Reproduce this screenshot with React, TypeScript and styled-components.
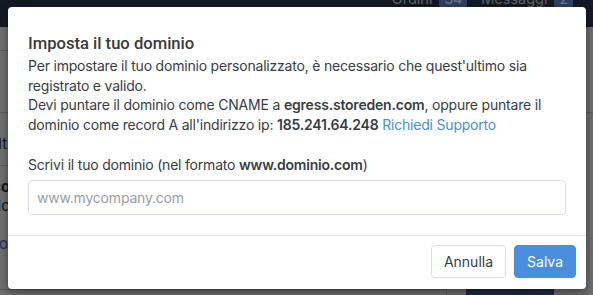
import React from "react";
import styled, { createGlobalStyle } from "styled-components";

const GlobalStyle = createGlobalStyle`
  html, body {
    margin: 0;
    padding: 0;
    overflow: hidden;
  }
  body {
    font-family: Inter, "Noto Sans", sans-serif;
  }
  * {
    box-sizing: border-box;
  }
`;

const Page = styled.div`
  position: relative;
  width: 593px;
  height: 295px;
  background-color: #f2f2f2;
  overflow: hidden;
`;

const TopBar = styled.div`
  height: 27px;
  background-color: #2d3a50;
  display: flex;
  justify-content: flex-end;
  align-items: flex-start;
  padding-right: 20px;
`;

const NavItem = styled.div`
  display: flex;
  align-items: center;
  gap: 7px;
  margin-top: -10px;
  margin-left: 14px;
  font-size: 14.5px;
  line-height: 18px;
  color: #d8d8d8;
`;

const Badge = styled.span`
  background-color: #5f93e0;
  color: #ffffff;
  border-radius: 3px;
  padding: 0 5px;
  font-size: 14px;
`;

const Body = styled.div`
  display: flex;
  height: calc(100% - 27px);
`;

const SidePanel = styled.div`
  width: 447px;
  background-color: #f5f5f5;
  border-right: 1px solid #cccccc;
`;

const PanelRow = styled.div<{ h: number; top: number }>`
  height: ${(p) => p.h}px;
  border-bottom: 1px solid #cccccc;
  padding-top: ${(p) => p.top}px;
  font-size: 15px;
  color: #333333;
`;

const PanelText = styled.div<{ link?: boolean; bold?: boolean }>`
  margin-left: -12px;
  line-height: 19px;
  color: ${(p) => (p.link ? "#3a7bd5" : "#333333")};
  font-weight: ${(p) => (p.bold ? 700 : 400)};
`;

const MainArea = styled.div`
  flex: 1;
  display: flex;
  flex-direction: column;
`;

const MainRow = styled.div<{ h: number }>`
  height: ${(p) => p.h}px;
  border-bottom: 1px solid #cccccc;
`;

const MainFooter = styled.div`
  flex: 1;
  display: flex;
  align-items: flex-end;
  padding-left: 19px;
`;

const NavyBlock = styled.div`
  width: 88px;
  height: 6px;
  background-color: #3c5e97;
`;

const Overlay = styled.div`
  position: absolute;
  inset: 0;
  background-color: rgba(0, 0, 0, 0.55);
  padding: 7px 0 0 8px;
`;

const Modal = styled.div`
  width: 578px;
  height: 282px;
  background-color: #ffffff;
  border-radius: 4px;
  box-shadow: 0 3px 9px rgba(0, 0, 0, 0.45);
  display: flex;
  flex-direction: column;
  color: #383d44;
`;

const ModalBody = styled.div`
  padding: 26px 20px 20px;
  border-bottom: 1px solid #e4e6ea;
`;

const Title = styled.h4`
  margin: 0 0 1px;
  font-family: Roboto, "Liberation Sans", sans-serif;
  font-size: 16.6px;
  line-height: 22px;
  font-weight: 500;
  color: #3a3a3a;
`;

const Paragraph = styled.p`
  margin: 0;
  font-size: 14px;
  line-height: 19.5px;
  letter-spacing: -0.2px;
`;

const Strong = styled.b`
  font-weight: 600;
`;

const Link = styled.a`
  color: #4a8fdd;
  text-decoration: none;
`;

const FormGroup = styled.div`
  margin-top: 21px;
`;

const Label = styled.label`
  display: block;
  font-size: 14px;
  line-height: 20px;
  letter-spacing: -0.2px;
  margin-bottom: 5px;
`;

const Input = styled.input`
  display: block;
  width: 100%;
  height: 35px;
  border: 1px solid #dcdfe6;
  border-radius: 4px;
  padding: 0 8px;
  font-family: Inter, "Noto Sans", sans-serif;
  font-size: 14px;
  letter-spacing: -0.2px;
  color: #333333;
  outline: none;
  &::placeholder {
    color: #9a9ea5;
  }
`;

const Footer = styled.div`
  display: flex;
  justify-content: flex-end;
  gap: 8px;
  padding: 9px 10px 10px;
`;

const Button = styled.button<{ primary?: boolean }>`
  height: 33px;
  padding: 0 12px;
  border-radius: 4px;
  font-family: Inter, "Noto Sans", sans-serif;
  font-size: 14px;
  cursor: pointer;
  border: 1px solid ${(p) => (p.primary ? "#4a8fdd" : "#dcdfe3")};
  background-color: ${(p) => (p.primary ? "#4a8fdd" : "#ffffff")};
  color: ${(p) => (p.primary ? "#ffffff" : "#383d44")};
`;

const App: React.FC = () => {
  return (
    <>
      <GlobalStyle />
      <Page>
        <TopBar>
          <NavItem>
            Ordini <Badge>34</Badge>
          </NavItem>
          <NavItem>
            Messaggi <Badge>2</Badge>
          </NavItem>
        </TopBar>
        <Body>
          <SidePanel>
            <PanelRow h={24} top={0} />
            <PanelRow h={62} top={0} />
            <PanelRow h={53} top={21}>
              <PanelText>Alt</PanelText>
            </PanelRow>
            <PanelRow h={124} top={11}>
              <PanelText bold>Icon</PanelText>
              <PanelText>Idc</PanelText>
              <PanelText>&nbsp;</PanelText>
              <PanelText link>Co</PanelText>
            </PanelRow>
          </SidePanel>
          <MainArea>
            <MainRow h={86} />
            <MainFooter>
              <NavyBlock />
            </MainFooter>
          </MainArea>
        </Body>
        <Overlay>
          <Modal>
            <ModalBody>
              <Title>Imposta il tuo dominio</Title>
              <Paragraph>
                Per impostare il tuo dominio personalizzato, è necessario che
                quest'ultimo sia registrato e valido.
                <br />
                Devi puntare il dominio come CNAME a{" "}
                <Strong>egress.storeden.com</Strong>, oppure puntare il dominio
                come record A all'indirizzo ip: <Strong>185.241.64.248</Strong>{" "}
                <Link href="#">Richiedi Supporto</Link>
              </Paragraph>
              <FormGroup>
                <Label>
                  Scrivi il tuo dominio (nel formato{" "}
                  <Strong>www.dominio.com</Strong>)
                </Label>
                <Input placeholder="www.mycompany.com" />
              </FormGroup>
            </ModalBody>
            <Footer>
              <Button>Annulla</Button>
              <Button primary>Salva</Button>
            </Footer>
          </Modal>
        </Overlay>
      </Page>
    </>
  );
};

export default App;
